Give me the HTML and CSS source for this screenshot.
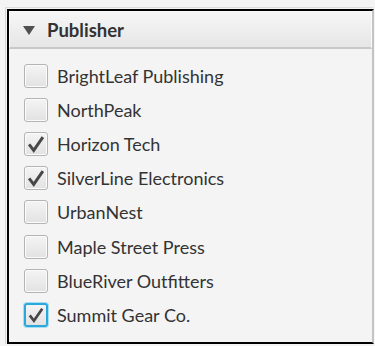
FILE: index.html
```html
<!DOCTYPE html>
<html>
<head>
<meta charset="utf-8">
<link rel="stylesheet" href="styles.css">
</head>
<body>
<div class="outer">
  <div class="pane">
    <div class="header">
      <svg class="arrow" width="12" height="9" viewBox="0 0 12 9"><polygon points="0,0 12,0 6,9" fill="#505050"/></svg>
      <span class="title">Publisher</span>
    </div>
    <div class="content">
      <div class="row"><span class="box"></span><span class="label">BrightLeaf Publishing</span></div>
      <div class="row"><span class="box"></span><span class="label">NorthPeak</span></div>
      <div class="row"><span class="box"><svg class="check" viewBox="0 0 24 24"><path d="M4.5 12.5 L9.5 19 L19.5 4.5" fill="none" stroke="#474747" stroke-width="3.2"/></svg></span><span class="label">Horizon Tech</span></div>
      <div class="row"><span class="box"><svg class="check" viewBox="0 0 24 24"><path d="M4.5 12.5 L9.5 19 L19.5 4.5" fill="none" stroke="#474747" stroke-width="3.2"/></svg></span><span class="label">SilverLine Electronics</span></div>
      <div class="row"><span class="box"></span><span class="label">UrbanNest</span></div>
      <div class="row"><span class="box"></span><span class="label">Maple Street Press</span></div>
      <div class="row"><span class="box"></span><span class="label">BlueRiver Outfitters</span></div>
      <div class="row"><span class="box focus"><svg class="check" viewBox="0 0 24 24"><path d="M4.5 12.5 L9.5 19 L19.5 4.5" fill="none" stroke="#474747" stroke-width="3.2"/></svg></span><span class="label">Summit Gear Co.</span></div>
    </div>
  </div>
</div>
</body>
</html>
```

FILE: styles.css
```css
html, body {
  margin: 0;
  padding: 0;
  background: #f4f4f4;
}
body {
  width: 375px;
  height: 346px;
  overflow: hidden;
  font-family: "Lato", "Open Sans", sans-serif;
  color: #333;
}
.outer {
  margin: 7px 0 0 5px;
  width: 368px;
  height: 337px;
  border-left: 1px solid #d6d6d6;
  border-top: 1px solid #dcdcdc;
  box-sizing: border-box;
  padding: 1px 0 0 1px;
}
.pane {
  width: 367px;
  height: 335px;
  box-sizing: border-box;
  border-top: 2px solid #000;
  border-left: 2px solid #000;
  border-bottom: 2px solid #000;
  border-right: 2px solid #c4c4c4;
  background: #f4f4f4;
  display: flex;
  flex-direction: column;
}
.header {
  height: 38px;
  box-sizing: border-box;
  background: linear-gradient(#f6f6f6, #e6e6e6);
  border: 1px solid #fafafa;
  border-bottom: 2px solid #c8c8c8;
  display: flex;
  align-items: center;
  padding-left: 13px;
}
.arrow {
  display: block;
  margin-right: 12px;
  margin-top: 1px;
}
.title {
  font-weight: bold;
  font-size: 18.5px;
  color: #333;
}
.content {
  padding: 10px 0 0 15px;
  display: flex;
  flex-direction: column;
}
.row {
  height: 34.1px;
  display: flex;
  align-items: center;
}
.box {
  width: 24px;
  height: 24px;
  box-sizing: border-box;
  border: 1px solid #b4b4b4;
  border-radius: 3px;
  background: linear-gradient(#f4f4f4, #e2e2e2);
  box-shadow: inset 0 0 0 1px #fbfbfb;
  display: flex;
  align-items: center;
  justify-content: center;
  margin-right: 9px;
}
.box.focus {
  border: 2px solid #2aa8dc;
  box-shadow: 0 0 0 1px #a8dcf0;
}
.check {
  width: 22px;
  height: 22px;
  display: block;
}
.label {
  font-size: 18px;
  color: #333;
}
```
